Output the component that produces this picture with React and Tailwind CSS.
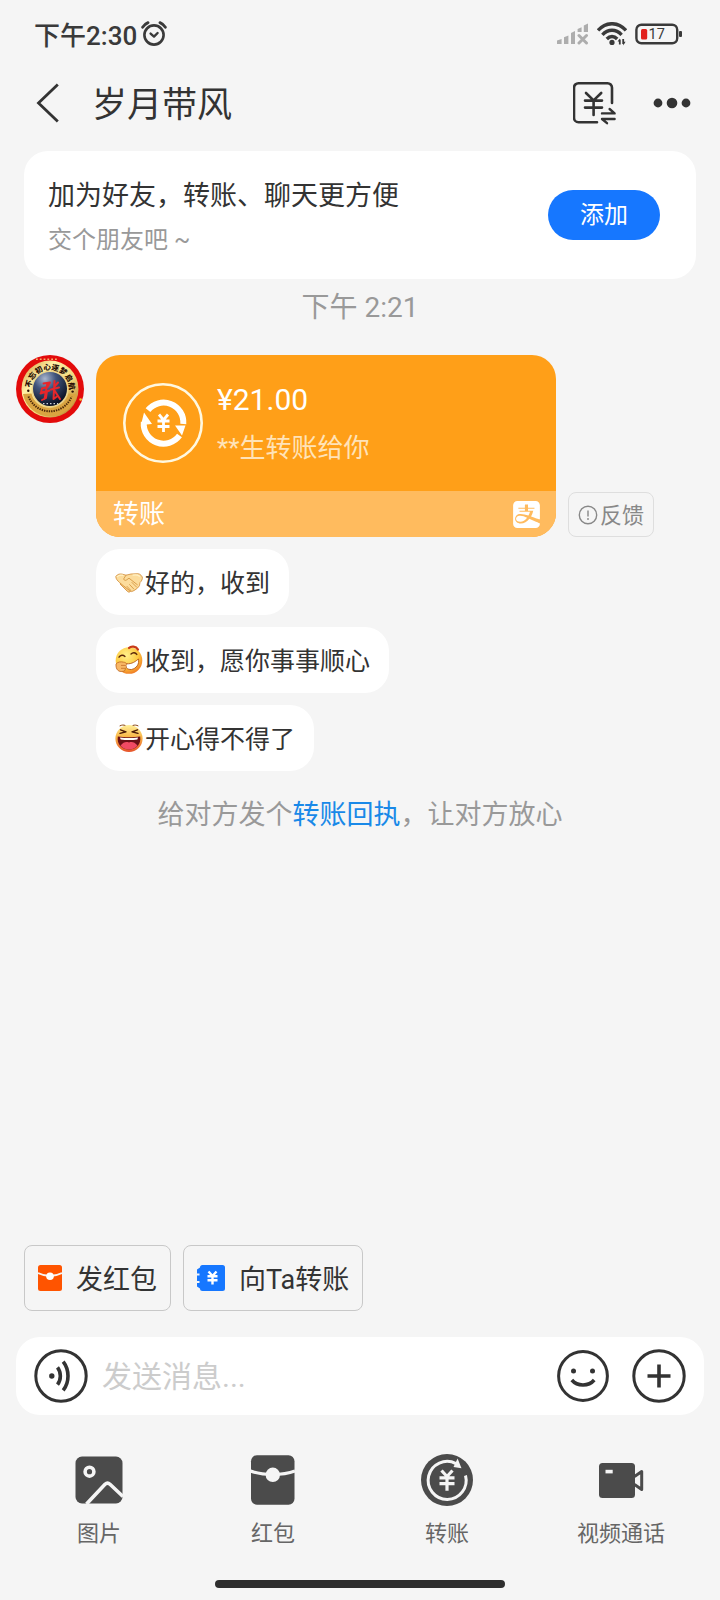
import { useState } from 'react';
import { SiAlipay } from 'react-icons/si';

function AlarmIcon() {
  return (
    <svg viewBox="0 0 26 26" className="w-[26px] h-[26px]" fill="none" stroke="#3a3a3a" strokeLinecap="round">
      <circle cx="13" cy="14" r="9.6" strokeWidth="2.6" />
      <path d="M9.6 12.6 13 15.6 16.6 12" strokeWidth="2.4" strokeLinejoin="round" />
      <path d="M1.6 6.2C3 4 4.600 2.600 7 1.600M24.400 6.200C23 4 21.400 2.600 19 1.600" strokeWidth="2.800" />
    </svg>
  );
}

function SignalIcon() {
  return (
    <svg viewBox="0 0 32 22" className="w-8 h-[22px]">
      <g fill="#adadad">
        <path d="M0 17.5 4.6 16v5H0zM7 14.2 11.4 12.4V21H7zM14 10 18 8v13h-4zM20.6 6 24.6 4.2V9h-4zM26.8 2.4 31 .6V9h-4.200z" />
      </g>
      <path d="M22 12.500 29.500 20M29.500 12.500 22 20" stroke="#adadad" strokeWidth="3" fill="none" strokeLinecap="round" />
    </svg>
  );
}

function WifiIcon() {
  return (
    <svg viewBox="0 0 30 24" className="w-[30px] h-6" fill="none" stroke="#3a3a3a" strokeWidth="3.400">
      <path d="M1 8.500C9-.6 21-.6 29 8.500" />
      <path d="M5.400 12.800C11 6.800 19 6.800 24.600 12.800" />
      <path d="M9.800 17C13 13.600 17 13.600 20.200 17" />
      <circle cx="15" cy="20.400" r="2.600" fill="#3a3a3a" stroke="none" />
      <path d="M22.800 22.500V17.500M26.200 17v5" strokeWidth="1.800" />
      <path d="M20.600 19.600l2.200-3.200v3.200zM28.600 19.800l-2.400 3.600v-3.600z" fill="#3a3a3a" stroke="none" />
    </svg>
  );
}

function BatteryIcon() {
  return (
    <svg viewBox="0 0 48 22" className="w-12 h-[22px]">
      <rect x="1.400" y="1.700" width="40.800" height="18.600" rx="5" fill="none" stroke="#3a3a3a" strokeWidth="2.400" />
      <rect x="6" y="6" width="6.200" height="10.400" rx="1.500" fill="#e2201c" />
      <rect x="44" y="8" width="3" height="6" rx="1" fill="#3a3a3a" />
      <text x="13.600" y="16.200" fontSize="14.500" fontFamily="Roboto, sans-serif" fill="#3a3a3a">17</text>
    </svg>
  );
}

function TransferIcon() {
  return (
    <svg viewBox="0 0 44 44" className="w-11 h-11" fill="none" stroke="#333" strokeWidth="2.600" strokeLinecap="round" strokeLinejoin="round">
      <path d="M24 41.200H5.500a4.500 4.500 0 0 1-4.500-4.500V6.700a4.500 4.500 0 0 1 4.500-4.500h29a4.500 4.500 0 0 1 4.500 4.500V22" />
      <path d="M13 12 20.600 19.400 28.200 12M12 19.600h17M12 26.600h17M20.600 19.400V34" />
      <path d="M29 32.400h12.600L36.600 28M41.600 38H29l5 4.200" strokeWidth="2.400" />
    </svg>
  );
}

function Avatar() {
  return (
    <svg viewBox="0 0 68 68" className="w-[68px] h-[68px] shrink-0" role="img" aria-label="岁月带风">
      <defs>
        <linearGradient id="gold" x1="0" y1="0" x2="1" y2="1">
          <stop offset="0" stopColor="#c9932f" />
          <stop offset="0.3" stopColor="#fff0a6" />
          <stop offset="0.6" stopColor="#f1d77b" />
          <stop offset="1" stopColor="#a96a17" />
        </linearGradient>
        <radialGradient id="globe" cx="0.35" cy="0.2" r="0.8">
          <stop offset="0" stopColor="#a9b6cf" />
          <stop offset="0.4" stopColor="#41557d" />
          <stop offset="1" stopColor="#0a1124" />
        </radialGradient>
        <path id="arcTop" d="M14.800 34a19.200 19.200 0 0 1 38.400 0" />
      </defs>
      <circle cx="34" cy="34" r="34" fill="#e30b0b" />
      <circle cx="34" cy="34" r="28.500" fill="url(#gold)" />
      <path d="M7 39a27.500 27.500 0 0 0 54 0l-8.500-.5a19 19 0 0 1-37 0z" fill="#d9a441" />
      <circle cx="34" cy="34" r="18.500" fill="#ecd58d" />
      <circle cx="34" cy="34" r="17" fill="url(#globe)" />
      <text fontSize="7.500" fontWeight="900" fill="#2a0f06" fontFamily="'Noto Sans CJK SC', sans-serif">
        <textPath href="#arcTop" startOffset="1">不忘初心逐梦启航</textPath>
      </text>
      <path d="M12.500 41.500a23 23 0 0 0 43 0" fill="none" stroke="#4a2708" strokeWidth="2" strokeDasharray="1.400 1" />
      <path d="M20 4.200h22" stroke="#f6b46a" strokeWidth="1.400" strokeDasharray="1.800 2" />
      <circle cx="12.300" cy="35.800" r="1.200" fill="#2a0f06" />
      <circle cx="56.600" cy="36.600" r="1.200" fill="#2a0f06" />
      <circle cx="64.600" cy="44.500" r="1.300" fill="#f3c433" />
      <path d="M27 48.600h15" stroke="#c8cfdd" strokeWidth="1.200" strokeDasharray="1.500 2" />
      <g fill="none" stroke="#e8262a" strokeLinecap="round" strokeLinejoin="round">
        <path d="M27.500 28.500 34 27.500l-2.500 4.500-5.500 1.500-1 4 6-1.500-1 7-4 2M31.500 28l-3 16M24.500 38.500l9-3" strokeWidth="1.900" />
        <path d="M38.500 26l-1 18 3.500-2.500M35 34.500l8-2M42 27.500l-3.500 4M38.500 35.500l5.500 8.500" strokeWidth="2" />
      </g>
    </svg>
  );
}

function YuanCycleIcon() {
  return (
    <svg viewBox="0 0 80 80" className="w-20 h-20 shrink-0" fill="none" stroke="#fff">
      <circle cx="40" cy="40" r="38.700" strokeWidth="2.600" stroke="#fff8e0" />
      <path d="M25 27.200A19.800 19.800 0 0 1 60.300 41" strokeWidth="6" />
      <path d="M56.500 52.500A19.800 19.800 0 0 1 20.800 39" strokeWidth="6" />
      <path d="M52 42.500h10.500l-3.500 10zM18 42l3-12.500L29 41z" fill="#fff" stroke="none" />
      <path d="M36 31.500 40.500 37l4.500-5.500M34.500 38h12M34.500 43.500h12M40.500 37v12" strokeWidth="2.800" />
    </svg>
  );
}

function HandshakeEmoji() {
  return (
    <svg viewBox="0 0 28 28" className="w-7 h-7 shrink-0" role="img" aria-label="握手">
      <g stroke="#d08a35" strokeWidth="0.800" strokeLinejoin="round">
        <path d="M6.500 14 16 22.500l-1.200 1.500c-1 .4-2-.2-2.600-.8L5 16z" fill="#f6cd86" />
        <path d="M.8 8.500C2.500 6 5 5.600 7.500 6.200l3.500 1L16 6l5-.2c2.600-.6 5 .6 6.300 3.200.4 2-.6 4-2.300 5.600l-.6 3.200-2 2.400-3 2.200-2.800 1.200-2.400-1.400-6-4.600-3.600-3C2.500 12.600.8 11 .8 8.500z" fill="#fcdc9c" />
      </g>
      <path d="M11 7.200 8.600 11c.6 1.600 2.200 1.800 3.400.6l2-1.400 8.400 6.600M17 14.500l4.600 4.600M14.600 16.600l4.200 4.400M12 18.400l3.800 4" fill="none" stroke="#d69743" strokeWidth="0.900" strokeLinecap="round" />
      <path d="M2.400 8.600C4 7 6 7 8 7.400M18 7.200c2.500-.5 4.500-.4 6.500 1" fill="none" stroke="#fff1c6" strokeWidth="1.200" strokeLinecap="round" />
    </svg>
  );
}

function GrinEmoji() {
  return (
    <svg viewBox="0 0 28 30" className="w-7 h-[30px] shrink-0" role="img" aria-label="偷笑">
      <defs>
        <radialGradient id="face1" cx="0.4" cy="0.3" r="0.75">
          <stop offset="0" stopColor="#fff08a" />
          <stop offset="0.6" stopColor="#fdc93f" />
          <stop offset="1" stopColor="#ee7422" />
        </radialGradient>
      </defs>
      <circle cx="14" cy="15.500" r="13.300" fill="url(#face1)" />
      <path d="M14 3c2-2.200 7-2 9 1.600" fill="none" stroke="#c83a17" strokeWidth="2.200" strokeLinecap="round" />
      <path d="M4 12.200c1.500-2.400 4-2.600 6-.8M16 9c2-2 4.400-1.600 5.800.4" fill="none" stroke="#5b2609" strokeWidth="1.400" strokeLinecap="round" />
      <path d="M10 18.500c5 1 9-.6 13.400-4.500 1.200 5-2 9.600-7 10.500-4 .2-6.600-2-6.400-6z" fill="#fff" stroke="#b35314" strokeWidth="0.900" />
      <path d="M1 19c2-2.400 5-2.400 7.600-1.800 2.800.2 3.800 2.200 2.400 3.400.8 1.400.4 2.400-.8 3 .4 1.600-.8 2.800-2.400 2.800C4 27.200.6 25 1 19z" fill="#f8b765" stroke="#bd6420" strokeWidth="0.800" />
      <path d="M6 20.400h4.600M6 23.300h4" stroke="#bd6420" strokeWidth="0.700" />
    </svg>
  );
}

function LaughEmoji() {
  return (
    <svg viewBox="0 0 28 30" className="w-7 h-[30px] shrink-0" role="img" aria-label="大笑">
      <defs>
        <linearGradient id="face2" x1="0" y1="0" x2="0" y2="1">
          <stop offset="0" stopColor="#fff09a" />
          <stop offset="0.45" stopColor="#f9b545" />
          <stop offset="1" stopColor="#e6512a" />
        </linearGradient>
      </defs>
      <circle cx="14" cy="15.500" r="13.600" fill="url(#face2)" />
      <path d="M5 2.800c2-1 3.600-1 5-.4M18 2.400c1.800-.6 3.400-.4 5 .4" fill="none" stroke="#8a4512" strokeWidth="1" strokeLinecap="round" />
      <path d="M5.500 6.800l5.500 2-6 1.600M22.500 6.800 17 8.800l6 1.600" fill="none" stroke="#4c1c08" strokeWidth="1.400" strokeLinecap="round" strokeLinejoin="round" />
      <path d="M2.800 13.600c6 1 16.400 1 22.400 0 1 7.400-3.400 12.900-11.200 12.900S1.800 21 2.800 13.600z" fill="#6b1016" />
      <path d="M5 14.400c6 .8 12 .8 18 0l-.6 2c-5 .9-11.800.9-16.800 0z" fill="#fff" />
      <path d="M5.500 22.600c3-3.800 5.500-4.200 8.500-3.200 3-1 5.500-.6 8.500 3.200-1.800 2.600-5.100 3.900-8.500 3.900s-6.700-1.300-8.500-3.900z" fill="#f14a63" />
    </svg>
  );
}

function RedPacketSmall() {
  return (
    <svg viewBox="0 0 24 26" className="w-6 h-[26px]">
      <rect width="24" height="26" rx="2.500" fill="#ff5400" />
      <path d="M0 8c8 4 16 4 24 0" fill="none" stroke="#f5f5f5" strokeWidth="1.900" />
      <circle cx="12" cy="11.300" r="3.800" fill="#fff" />
    </svg>
  );
}

function TransferSmall() {
  return (
    <svg viewBox="0 0 28 26" className="w-7 h-[26px]">
      <path d="M5.500 0H25.500A2.500 2.500 0 0 1 28 2.500v21a2.500 2.500 0 0 1-2.500 2.500H5.500A2.500 2.500 0 0 1 3 23.500L0 21.500v-3.500h2.500v-2H0v-5.500h2.500v-2H0V4.500l3-2A2.500 2.500 0 0 1 5.500 0z" fill="#1677ff" />
      <path d="M11.500 6.500 15.500 11l4-4.500M10.500 11.300h10M10.500 15.300h10M15.500 11v8.600" fill="none" stroke="#fff" strokeWidth="2.400" />
    </svg>
  );
}

function VoiceIcon() {
  return (
    <svg viewBox="0 0 54 54" className="w-[54px] h-[54px]" fill="none" stroke="#333" strokeWidth="3">
      <circle cx="27" cy="27" r="25.200" />
      <circle cx="17.800" cy="27" r="2.700" fill="#333" stroke="none" />
      <path d="M23.500 18.300c3.800 5 3.800 12.400 0 17.400M29.200 12.600c6.400 8.400 6.400 20.400 0 28.800" strokeWidth="3.600" />
    </svg>
  );
}

function SmileIcon() {
  return (
    <svg viewBox="0 0 52 52" className="w-[52px] h-[52px]" fill="none" stroke="#333" strokeWidth="3">
      <circle cx="26" cy="26" r="24.400" />
      <circle cx="16.500" cy="21" r="2.500" fill="#333" stroke="none" />
      <circle cx="35.500" cy="21" r="2.500" fill="#333" stroke="none" />
      <path d="M14.800 30c5.600 6.600 16.800 6.600 22.400 0" strokeWidth="3.600" />
    </svg>
  );
}

function PlusIcon() {
  return (
    <svg viewBox="0 0 54 54" className="w-[54px] h-[54px]" fill="none" stroke="#333" strokeWidth="3">
      <circle cx="27" cy="27" r="25.200" />
      <path d="M27 15.500v23M15.500 27h23" strokeWidth="3.600" />
    </svg>
  );
}

function PhotoTool() {
  return (
    <svg viewBox="0 0 52 52" className="w-[52px] h-[52px]">
      <rect x="2.500" y="2.500" width="47" height="47" rx="6.500" fill="#4b4b4b" />
      <circle cx="16.500" cy="17.700" r="4.400" fill="none" stroke="#f5f5f5" strokeWidth="3.600" />
      <path d="M13.500 50 32 30.300Q34.500 28 37 30.300L50 42.500" fill="none" stroke="#f5f5f5" strokeWidth="3.600" />
    </svg>
  );
}

function RedPacketTool() {
  return (
    <svg viewBox="0 0 52 52" className="w-[52px] h-[52px]">
      <rect x="4" y="1.200" width="43.500" height="49.500" rx="6" fill="#4b4b4b" />
      <path d="M3.500 17c12 4.600 32 4.600 44.500 0" fill="none" stroke="#f5f5f5" strokeWidth="3" />
      <circle cx="25.800" cy="20.800" r="7.200" fill="#f5f5f5" />
    </svg>
  );
}

function TransferTool() {
  return (
    <svg viewBox="0 0 52 52" className="w-[52px] h-[52px]" fill="none" stroke="#f5f5f5">
      <circle cx="26" cy="26" r="26" fill="#4b4b4b" stroke="none" />
      <path d="M44.500 21.500A19 19 0 1 1 35 9.600" strokeWidth="3" />
      <path d="M36.600 4.500 40.500 14.200 32.500 13z" fill="#f5f5f5" stroke="none" />
      <path d="M20.500 16.500 26 22.500l5.500-6M18.500 23.800h15M18.500 29.600h15M26 22.500v14.300" strokeWidth="3.200" />
    </svg>
  );
}

function VideoTool() {
  return (
    <svg viewBox="0 0 52 52" className="w-[52px] h-[52px]">
      <rect x="4" y="9" width="36" height="35" rx="3.500" fill="#4b4b4b" />
      <rect x="10.500" y="15.800" width="7.200" height="3.600" fill="#f5f5f5" />
      <path d="M39.500 22.500l7.200-5v18l-7.200-5" fill="none" stroke="#4b4b4b" strokeWidth="3" strokeLinejoin="round" />
    </svg>
  );
}

const REPLIES = [
  { Emoji: HandshakeEmoji, text: '好的，收到' },
  { Emoji: GrinEmoji, text: '收到，愿你事事顺心' },
  { Emoji: LaughEmoji, text: '开心得不得了' },
];

const TOOLS = [
  { Icon: PhotoTool, label: '图片' },
  { Icon: RedPacketTool, label: '红包' },
  { Icon: TransferTool, label: '转账' },
  { Icon: VideoTool, label: '视频通话' },
];

export default function App() {
  const [message, setMessage] = useState('');

  return (
    <div className="min-h-screen flex flex-col bg-[#f5f5f5] text-[#333] font-['Roboto','Noto_Sans_CJK_SC',sans-serif]">
      {/* Status bar */}
      <div className="flex items-center h-[68px] pl-[34px] pr-[37px] text-[#3a3a3a]">
        <span className="pt-1 text-[26px] leading-8 font-medium">下午2:30</span>
        <span className="ml-1"><AlarmIcon /></span>
        <div className="ml-auto flex items-center gap-2">
          <SignalIcon />
          <WifiIcon />
          <BatteryIcon />
        </div>
      </div>

      {/* Header */}
      <header className="flex items-center h-[70px] pl-9 pr-[29px]">
        <button aria-label="返回">
          <svg viewBox="0 0 24 40" className="w-6 h-10" fill="none" stroke="#333" strokeWidth="2.800">
            <path d="M21.800 1.500 2.500 20l19.300 18.500" />
          </svg>
        </button>
        <h1 className="ml-8 pt-[6px] text-[35px] leading-[44px]">岁月带风</h1>
        <button aria-label="转账" className="ml-auto"><TransferIcon /></button>
        <button aria-label="更多" className="ml-9">
          <svg viewBox="0 0 38 12" className="w-[38px] h-3" fill="#333">
            <circle cx="5" cy="6" r="4.400" />
            <circle cx="19" cy="6" r="5.300" />
            <circle cx="33" cy="6" r="4.400" />
          </svg>
        </button>
      </header>

      {/* Add friend card */}
      <section className="mt-[13px] mx-6 flex items-center justify-between rounded-3xl bg-white py-6 pl-6 pr-9">
        <div>
          <p className="pt-[2px] text-[27px] leading-[38px]">加为好友，转账、聊天更方便</p>
          <p className="mt-[10px] text-[24px] leading-[30px] text-[#999]">交个朋友吧 ~</p>
        </div>
        <button className="w-28 h-[50px] rounded-full bg-[#1677ff] text-[24px] leading-8 text-white">添加</button>
      </section>

      <main className="flex-1 pb-6">
        <p className="mt-[10px] pt-[2px] text-center text-[28px] leading-[34px] text-[#999]">下午 2:21</p>

        <div className="mt-[30px] flex items-start gap-3 pl-4">
          <Avatar />
          <div className="flex flex-col items-start gap-3">
            <div className="flex items-end gap-3">
              <a href="#transfer" className="block w-[460px] overflow-hidden rounded-3xl bg-[#ff9f18] text-white">
                <div className="flex h-[136px] items-center gap-[14px] pl-[27px]">
                  <YuanCycleIcon />
                  <div className="pt-[2px]">
                    <p className="text-[30px] leading-9">¥21.00</p>
                    <p className="mt-3 text-[26px] leading-9 text-[#ffe3b8]">**生转账给你</p>
                  </div>
                </div>
                <div className="flex h-[46px] items-center justify-between bg-[#ffbb5e] pl-[17px] pr-4">
                  <span className="text-[26px] leading-8">转账</span>
                  <SiAlipay className="w-[27px] h-[27px]" />
                </div>
              </a>
              <button className="flex h-[45px] items-center gap-[2px] rounded-lg border border-[#dedede] px-[9px] text-[22px] leading-8 text-[#888]">
                <svg viewBox="0 0 20 20" className="w-5 h-5" fill="none" stroke="#888" strokeWidth="1.400">
                  <circle cx="10" cy="10" r="8.700" />
                  <path d="M10 5.500v6M10 13v2" />
                </svg>
                <span className="pt-[2px]">反馈</span>
              </button>
            </div>

            {REPLIES.map(({ Emoji, text }) => (
              <button key={text} className="flex h-[66px] items-center gap-[2px] rounded-3xl bg-white px-[19px] text-[25px] leading-9">
                <Emoji />
                <span className="pt-1">{text}</span>
              </button>
            ))}
          </div>
        </div>

        <p className="mt-[26px] text-center text-[27px] leading-9 text-[#999]">
          给对方发个<a href="#receipt" className="text-[#1989e8]">转账回执</a>，让对方放心
        </p>
      </main>

      {/* Quick actions */}
      <div className="flex gap-3 px-6">
        <button className="flex h-[66px] items-center gap-[14px] rounded-lg border border-[#c8c8c8] px-[13px] text-[27px] leading-9">
          <RedPacketSmall />
          <span className="pt-1">发红包</span>
        </button>
        <button className="flex h-[66px] items-center gap-[14px] rounded-lg border border-[#c8c8c8] px-[13px] text-[27px] leading-9">
          <TransferSmall />
          <span className="pt-1">向Ta转账</span>
        </button>
      </div>

      {/* Message box */}
      <div className="mt-[26px] mx-4 flex h-[78px] items-center rounded-3xl bg-white px-[18px]">
        <button aria-label="语音"><VoiceIcon /></button>
        <input
          type="text"
          aria-label="发送消息"
          placeholder="发送消息..."
          value={message}
          onChange={(e) => setMessage(e.target.value)}
          className="mx-[14px] min-w-0 flex-1 bg-transparent pt-[2px] text-[30px] leading-10 outline-none placeholder:text-[#ccc]"
        />
        <button aria-label="表情"><SmileIcon /></button>
        <button aria-label="更多功能" className="ml-[23px]"><PlusIcon /></button>
      </div>

      {/* Tools */}
      <nav className="mt-[39px] grid grid-cols-4 px-3">
        {TOOLS.map(({ Icon, label }) => (
          <button key={label} className="flex flex-col items-center gap-[13px] text-[22px] leading-[30px] text-[#666]">
            <Icon />
            {label}
          </button>
        ))}
      </nav>

      <div className="mt-[31px] mb-3 mx-auto h-2 w-[290px] rounded-full bg-[#2e2e2e]" />
    </div>
  );
}
